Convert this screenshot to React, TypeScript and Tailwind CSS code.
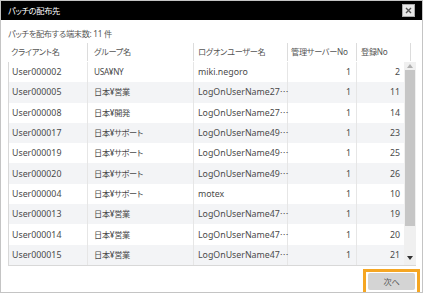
const rows = [
  { client: 'User000002', group: 'USA¥NY', user: 'miki.negoro', cut: false, server: 1, no: 2 },
  { client: 'User000005', group: '日本¥営業', user: 'LogOnUserName27', cut: true, server: 1, no: 11 },
  { client: 'User000008', group: '日本¥開発', user: 'LogOnUserName27', cut: true, server: 1, no: 14 },
  { client: 'User000017', group: '日本¥サポート', user: 'LogOnUserName49', cut: true, server: 1, no: 23 },
  { client: 'User000019', group: '日本¥サポート', user: 'LogOnUserName49', cut: true, server: 1, no: 25 },
  { client: 'User000020', group: '日本¥サポート', user: 'LogOnUserName49', cut: true, server: 1, no: 26 },
  { client: 'User000004', group: '日本¥サポート', user: 'motex', cut: false, server: 1, no: 10 },
  { client: 'User000013', group: '日本¥営業', user: 'LogOnUserName47', cut: true, server: 1, no: 19 },
  { client: 'User000014', group: '日本¥営業', user: 'LogOnUserName47', cut: true, server: 1, no: 20 },
  { client: 'User000015', group: '日本¥営業', user: 'LogOnUserName47', cut: true, server: 1, no: 21 },
];

const font = { fontFamily: '"Noto Sans", "Noto Sans CJK JP", sans-serif' };

// japanese labels are set narrower, like the original UI font
const jp = 'text-[8.2px] tracking-[-0.3px]';

export default function App() {
  return (
    <div
      className="flex h-[293px] w-[423px] flex-col overflow-hidden whitespace-nowrap border border-[#c4c4c4] bg-white text-[8.8px] leading-[12px] text-[#4a4a4a] [font-feature-settings:'palt']"
      style={font}
    >
      <div className="flex h-[19px] shrink-0 items-center justify-between bg-black pl-[7px] pr-[7px]">
        <span className={`${jp} text-white`}>パッチの配布先</span>
        <button className="flex h-[13px] w-[13px] items-center justify-center border border-[#aaa] bg-[#e8e8e8]">
          <svg width="7" height="7" viewBox="0 0 7 7">
            <path d="M1 1L6 6M6 1L1 6" stroke="#555" strokeWidth="1.4" />
          </svg>
        </button>
      </div>

      <div className="flex flex-1 flex-col px-[7px]">
        <div className={`${jp} mt-[8px] h-[12px] text-[#555]`}>パッチを配布する端末数: 11 件</div>

        <div className={`${jp} mt-[3px] flex h-[18px] items-center text-[#555]`}>
          <div className="flex h-full w-[80px] items-center border-r border-[#dcdcdc] pl-[3px]">クライアント名</div>
          <div className="flex h-full w-[106px] items-center border-r border-[#dcdcdc] pl-[6px]">グループ名</div>
          <div className="flex h-full w-[94px] items-center border-r border-[#dcdcdc] pl-[4px]">ログオンユーザー名</div>
          <div className="flex h-full w-[69px] items-center border-r border-[#dcdcdc] pl-[3px]">管理サーバーNo</div>
          <div className="flex h-full w-[54px] items-center border-r border-[#dcdcdc] pl-[4px]">登録No</div>
        </div>

        <div className="mt-[1px] flex w-[408px] border-b border-l border-[#d8d8d8]">
          <div className="flex-1">
            {rows.map((r, i) => (
              <div
                key={r.client}
                className={`flex h-[20.3px] items-center ${i % 2 === 1 ? 'bg-[#f3f4f6]' : 'bg-white'}`}
              >
                <div className="flex h-full w-[79px] items-center border-r border-[#e6e6e6] pl-[3px]">{r.client}</div>
                <div className="flex h-full w-[106px] items-center border-r border-[#e6e6e6] pl-[6px]">
                  <span className={jp}>{r.group}</span>
                </div>
                <div className="flex h-full w-[94px] items-center border-r border-[#e6e6e6] pl-[4px]">
                  {r.user}
                  {r.cut && (
                    <span style={{ fontFamily: '"Noto Sans CJK JP", sans-serif' }}>…</span>
                  )}
                </div>
                <div className="flex h-full w-[69px] items-center justify-end border-r border-[#e6e6e6] pr-[5px]">
                  {r.server}
                </div>
                <div className="flex h-full flex-1 items-center justify-end pr-[4px]">{r.no}</div>
              </div>
            ))}
          </div>
          <div className="flex w-[12px] flex-col bg-[#f0f0f0]">
            <div className="flex h-[8px] items-center justify-center">
              <svg width="6" height="4" viewBox="0 0 6 4">
                <path d="M0 4L3 0L6 4Z" fill="#b0b0b0" />
              </svg>
            </div>
            <div className="mx-[1px] h-[156px] bg-[#c6c6c6]" />
            <div className="flex-1" />
            <div className="flex h-[14px] items-center justify-center">
              <svg width="6" height="4" viewBox="0 0 6 4">
                <path d="M0 0L6 0L3 4Z" fill="#333" />
              </svg>
            </div>
          </div>
        </div>

        <div className="mt-[3px] flex justify-end">
          <div className="mr-[-5px] flex h-[26px] w-[57px] items-center justify-center border-[3px] border-[#f5a623]">
            <button className={`${jp} h-[17px] w-[47px] rounded-[2px] bg-[#d4d4d4] text-[#555]`}>次へ</button>
          </div>
        </div>
      </div>
    </div>
  );
}
